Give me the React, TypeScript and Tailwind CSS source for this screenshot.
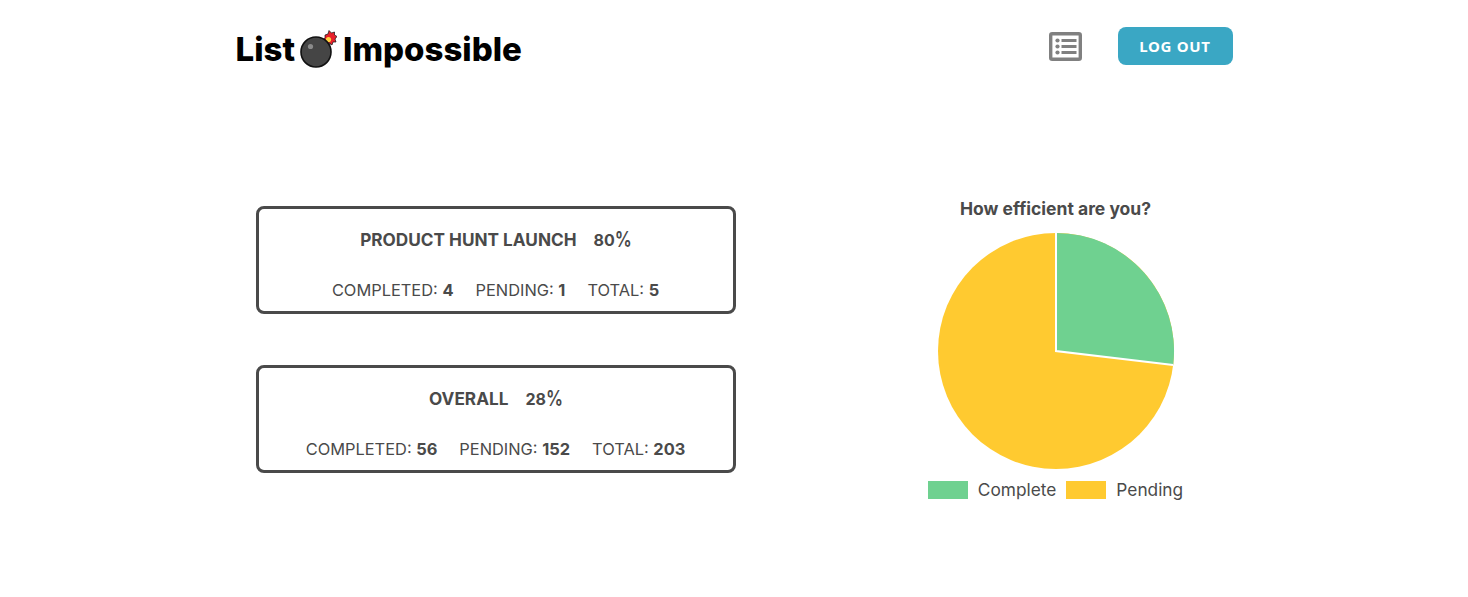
const Bomb = () => (
  <svg width="38" height="38" viewBox="0 0 38 38" className="shrink-0">
    <rect x="24" y="10" width="7" height="8" transform="rotate(40 27.5 14)" fill="#6b6b6b" />
    <path d="M26 5l3-1 1-3.500 2.500 2.500 3-1 0 3 2.500 1.500-2 2.500 1 3-3 0-1 3-2.500-2-3 1-.5-3-3-1 2-2.500z" fill="#e8212b" stroke="#111" strokeWidth="0.7" />
    <circle cx="29.500" cy="9.500" r="2.600" fill="#ffd23f" />
    <circle cx="17" cy="22" r="15" fill="#454545" stroke="#111" strokeWidth="1.6" />
    <circle cx="11.500" cy="16.500" r="2.600" fill="#8a8a8a" />
  </svg>
);

const ListIcon = () => (
  <svg width="33" height="29" viewBox="0 0 33 29" className="mt-[1px] text-[#808080]">
    <rect x="1.7" y="1.7" width="29.600" height="25.600" rx="1.5" fill="none" stroke="currentColor" strokeWidth="3.400" />
    <circle cx="8.500" cy="8.500" r="2.100" fill="currentColor" />
    <circle cx="8.500" cy="14.500" r="2.100" fill="currentColor" />
    <circle cx="8.500" cy="20.500" r="2.100" fill="currentColor" />
    <rect x="12.500" y="7" width="15" height="3" fill="currentColor" />
    <rect x="12.500" y="13" width="15" height="3" fill="currentColor" />
    <rect x="12.500" y="19" width="15" height="3" fill="currentColor" />
  </svg>
);

const Stat = ({ label, value }: { label: string; value: number }) => (
  <span>
    {label}: <b className="font-bold">{value}</b>
  </span>
);

const Card = ({ title, pct, completed, pending, total }: { title: string; pct: number; completed: number; pending: number; total: number }) => (
  <div className="w-[480px] h-[108px] border-[3px] border-[#4a4a4a] rounded-lg flex flex-col items-center text-[#4a4a4a]">
    <div className="mt-[18px] h-[26px] flex items-center gap-[17px] text-[17.2px] font-bold">
      <span>{title}</span>
      <span className="flex items-baseline text-[16px]">
        {pct}
        <span className="text-[17px] font-semibold leading-none tracking-[-1px] scale-y-125">%</span>
      </span>
    </div>
    <div className="mt-[25px] flex gap-[22px] text-[16.4px]">
      <Stat label="COMPLETED" value={completed} />
      <Stat label="PENDING" value={pending} />
      <Stat label="TOTAL" value={total} />
    </div>
  </div>
);

export default function App() {
  return (
    <div className="min-h-[597px] bg-white font-['Inter','Noto_Sans',sans-serif]">
      <header className="w-[997px] mx-auto pt-[27px] flex justify-between items-start">
        <div className="flex items-center h-[44px] text-[33px] font-extrabold text-black leading-none">
          <span className="mr-[4px]">List</span>
          <Bomb />
          <span className="ml-[6px]">Impossible</span>
        </div>
        <div className="flex items-center">
          <ListIcon />
          <button className="ml-[36px] w-[115px] h-[38px] rounded-lg bg-[#3aa7c4] text-white text-[15px] font-bold tracking-[0.7px] font-['Noto_Sans',sans-serif]">
            LOG OUT
          </button>
        </div>
      </header>
      <main className="w-[997px] mx-auto mt-[106px] flex">
        <div className="ml-[20px] mt-[29px] flex flex-col gap-[51px]">
          <Card title="PRODUCT HUNT LAUNCH" pct={80} completed={4} pending={1} total={5} />
          <Card title="OVERALL" pct={28} completed={56} pending={152} total={203} />
        </div>
        <div className="ml-[192px] w-[256px] flex flex-col items-center text-[#4a4a4a]">
          <div className="mt-[19px] h-[24px] text-[17.5px] font-bold whitespace-nowrap">How efficient are you?</div>
          <svg width="240" height="240" viewBox="-120 -120 240 240" className="mt-[11px]">
            <circle r="118" fill="#ffca30" />
            <path d="M0 0V-118A118 118 0 0 1 117.2 14Z" fill="#6fd190" />
            <path d="M0-118V0L117.2 14" fill="none" stroke="#fff" strokeWidth="2" />
          </svg>
          <div className="mt-[6px] flex items-center text-[17.3px] whitespace-nowrap">
            <span className="w-[40px] h-[18px] bg-[#6fd190]" />
            <span className="ml-[10px]">Complete</span>
            <span className="ml-[10px] w-[40px] h-[18px] bg-[#ffca30]" />
            <span className="ml-[10px]">Pending</span>
          </div>
        </div>
      </main>
    </div>
  );
}
